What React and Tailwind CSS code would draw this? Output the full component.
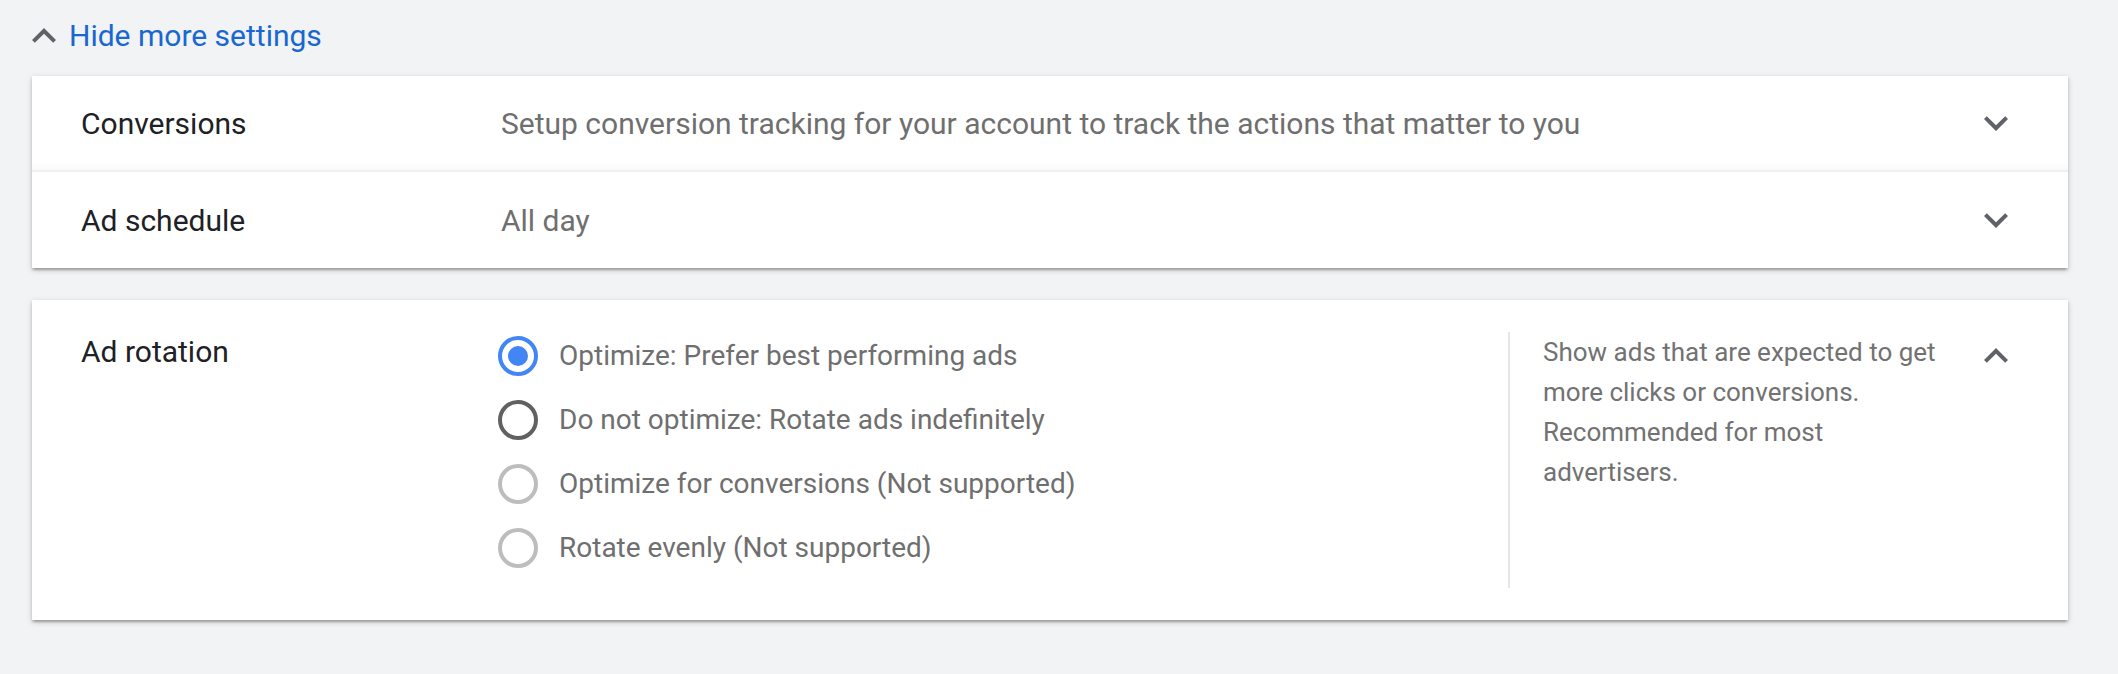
import React from "react";

const ExpandMore = () => (
  <svg width="48" height="48" viewBox="0 0 24 24" className="shrink-0">
    <path d="M16.59 8.59L12 13.17 7.41 8.59 6 10l6 6 6-6z" fill="#5f6368" />
  </svg>
);

const ExpandLess = () => (
  <svg width="48" height="48" viewBox="0 0 24 24" className="shrink-0">
    <path d="M12 8l-6 6 1.41 1.41L12 10.83l4.59 4.58L18 14z" fill="#5f6368" />
  </svg>
);

const Radio = ({ state }) => {
  if (state === "checked") {
    return (
      <span className="w-[40px] h-[40px] rounded-full border-[4px] border-[#4285f4] flex items-center justify-center shrink-0">
        <span className="w-[20px] h-[20px] rounded-full bg-[#4285f4]" />
      </span>
    );
  }
  if (state === "disabled") {
    return <span className="w-[40px] h-[40px] rounded-full border-[4px] border-[#bdbdbd] shrink-0" />;
  }
  return <span className="w-[40px] h-[40px] rounded-full border-[4px] border-[#616161] shrink-0" />;
};

const options = [
  { label: "Optimize: Prefer best performing ads", state: "checked" },
  { label: "Do not optimize: Rotate ads indefinitely", state: "normal" },
  { label: "Optimize for conversions (Not supported)", state: "disabled" },
  { label: "Rotate evenly (Not supported)", state: "disabled" },
];

export default function App() {
  return (
    <div
      className="w-full h-[674px] bg-[#f1f3f4] overflow-hidden"
      style={{ fontFamily: "Roboto, 'Noto Sans', Arial, sans-serif" }}
    >
      {/* Header toggle */}
      <div className="flex items-center pl-[20px] pt-[12px] h-[60px]">
        <ExpandLess />
        <span className="ml-[1px] text-[30px] leading-[48px] text-[#1967d2]">Hide more settings</span>
      </div>

      <div className="pl-[32px] pr-[50px] pt-[16px]">
        {/* Card 1 */}
        <div className="bg-white shadow-[0_2px_2px_rgba(0,0,0,0.14),0_4px_2px_-2px_rgba(0,0,0,0.12),0_2px_6px_rgba(0,0,0,0.2)]">
          <div className="h-[96px] flex items-center pl-[49px] pr-[48px] border-b-2 border-[#efefef] shadow-[inset_0_-10px_10px_-8px_rgba(0,0,0,0.035)]">
            <div className="w-[420px] text-[30px] text-[#202124]">Conversions</div>
            <div className="flex-1 text-[30px] text-[#6f6f6f]">
              Setup conversion tracking for your account to track the actions that matter to you
            </div>
            <ExpandMore />
          </div>
          <div className="h-[96px] flex items-center pl-[49px] pr-[48px]">
            <div className="w-[420px] text-[30px] text-[#202124]">Ad schedule</div>
            <div className="flex-1 text-[30px] text-[#6f6f6f]">All day</div>
            <ExpandMore />
          </div>
        </div>

        {/* Card 2 */}
        <div className="mt-[32px] bg-white py-[32px] pl-[49px] pr-[48px] flex shadow-[0_2px_2px_rgba(0,0,0,0.14),0_4px_2px_-2px_rgba(0,0,0,0.12),0_2px_6px_rgba(0,0,0,0.2)]">
          <div className="w-[417px] text-[30px] leading-[40px] text-[#202124]">Ad rotation</div>
          <div className="flex-1 flex flex-col gap-[16px] pb-[16px]">
            {options.map((o) => (
              <div key={o.label} className="h-[48px] flex items-center gap-[21px]">
                <Radio state={o.state} />
                <span className="text-[28px] leading-[48px] text-[#6f6f6f]">{o.label}</span>
              </div>
            ))}
          </div>
          <div className="w-[2px] bg-[#e6e6e6]" />
          <div className="pl-[33px] w-[462px] flex-none">
            <p className="w-[400px] text-[26px] leading-[40px] text-[#727272]">
              Show ads that are expected to get more clicks or conversions. Recommended for most advertisers.
            </p>
          </div>
          <div className="self-start">
            <ExpandLess />
          </div>
        </div>
      </div>
    </div>
  );
}
